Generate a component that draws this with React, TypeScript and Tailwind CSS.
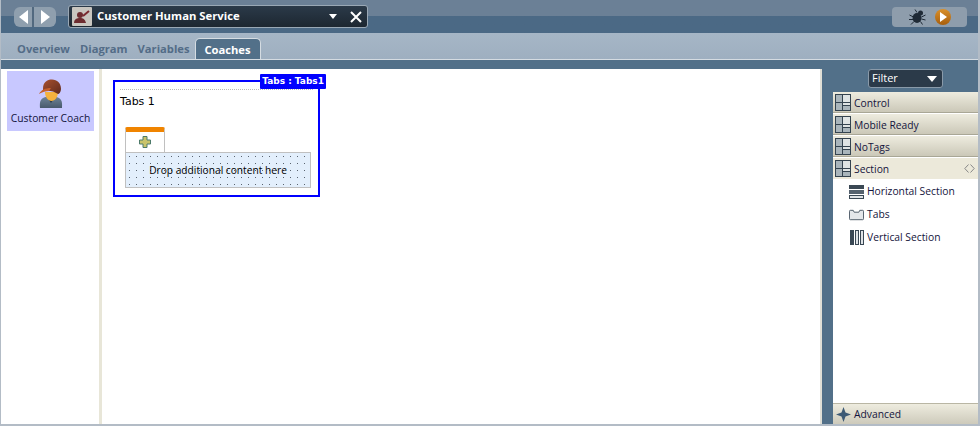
import type { ReactNode } from "react";

const uiFont = "font-['Open_Sans','Liberation_Sans',sans-serif]";

function GridIcon() {
  return (
    <svg width="16" height="17" viewBox="0 0 16 17" className="shrink-0">
      <rect x="0.5" y="0.5" width="15" height="16" fill="#dfe4e4" stroke="#34434f" />
      <rect x="1" y="1" width="6" height="15" fill="#a9b5bb" />
      <rect x="8" y="12" width="7" height="4" fill="#a9b5bb" />
      <path d="M7.500 1v15M1 8.500h14M8 11.500h7" stroke="#34434f" fill="none" />
    </svg>
  );
}

function PaletteHeader({ label, active }: { label: string; active?: boolean }) {
  return (
    <div className={`flex h-[21px] items-center gap-[3px] pl-[2px] ${active ? "bg-[#ece9da]" : "border-b border-[#a9a796] bg-gradient-to-b from-[#eeecdf] to-[#cbc8b8]"}`}>
      <GridIcon />
      <span className="pt-[3px] text-[10.3px] text-[#14143c]">{label}</span>
      {active && (
        <svg width="11" height="9" viewBox="0 0 11 9" className="ml-auto mr-[3px]">
          <path d="M4.500 .5L.8 4.500 4.500 8.500M6.500 .5L10.200 4.500 6.500 8.500" stroke="#888" fill="none" />
        </svg>
      )}
    </div>
  );
}

function PaletteItem({ label, icon }: { label: string; icon: ReactNode }) {
  return (
    <div className="flex h-[23px] items-center gap-[3px] pl-[16px]">
      <span className="flex w-[15px] justify-center">{icon}</span>
      <span className="text-[10.3px] text-[#14143c]">{label}</span>
    </div>
  );
}

export default function App() {
  return (
    <div className={`box-border flex h-[426px] w-[980px] flex-col overflow-hidden border-b-2 border-l border-r-2 border-[#b3bcc6] bg-white ${uiFont}`}>
      {/* Top bar */}
      <div className="flex h-[33px] shrink-0 items-center bg-gradient-to-b from-[#6b8096] from-50% to-[#4b6985] to-50% pl-[13px] pr-[11px]">
        <div className="flex h-[20px] w-[42px] overflow-hidden rounded-[6px] bg-[#8f9fae]">
          <div className="flex w-[20px] items-center justify-center border-r-2 border-[#52697f]">
            <div className="h-0 w-0 border-y-[7px] border-r-[9px] border-y-transparent border-r-white" />
          </div>
          <div className="flex flex-1 items-center justify-center">
            <div className="h-0 w-0 border-y-[7px] border-l-[9px] border-y-transparent border-l-white" />
          </div>
        </div>
        <div className="ml-[12px] flex h-[23px] w-[300px] items-center rounded-[3px] border border-[#9aa8b5] bg-gradient-to-b from-[#2b3a49] to-[#1d2731] pl-[3px] pr-[5px]">
          <svg width="20" height="19" viewBox="0 0 20 19" className="shrink-0">
            <rect width="20" height="19" rx="1" fill="#c9c6c0" />
            <circle cx="8" cy="8" r="3" fill="#6d2c30" />
            <path d="M2 16c0-4 3-5 6-5s5 1 6 5z" fill="#6d2c30" />
            <path d="M11 9l6-5" stroke="#7a2a30" strokeWidth="2" />
          </svg>
          <span className="ml-[5px] text-[11.3px] font-bold text-white">Customer Human Service</span>
          <div className="ml-auto h-0 w-0 border-x-[4px] border-t-[5px] border-x-transparent border-t-white" />
          <svg width="12" height="12" viewBox="0 0 12 12" className="ml-[13px]">
            <path d="M1 1l10 10M11 1L1 11" stroke="white" strokeWidth="2" />
          </svg>
        </div>
        <div className="ml-auto flex h-[20px] w-[75px] items-center justify-center gap-[9px] rounded-[4px] bg-[#8e9dac]">
          <svg width="17" height="16" viewBox="0 0 17 16">
            <ellipse cx="8" cy="9" rx="4.500" ry="5" fill="#1f2a36" />
            <circle cx="11.500" cy="4" r="2.500" fill="#1f2a36" />
            <path d="M.5 6l4 2M0 10.500h4M2 15.500l3-3M16.500 6l-4 2M16.500 11l-4-1M13.500 15.500l-2-3M6 .5l2 3" stroke="#1f2a36" />
          </svg>
          <div className="flex h-[16px] w-[16px] items-center justify-center rounded-full bg-gradient-to-b from-[#d9902a] to-[#a85f0c]">
            <div className="ml-[2px] h-0 w-0 border-y-[5px] border-l-[7px] border-y-transparent border-l-white" />
          </div>
        </div>
      </div>

      {/* Tabs */}
      <div className="flex h-[27px] shrink-0 items-end border-b border-[#d5dce2] bg-gradient-to-b from-[#a6b6c6] to-[#9eafc0] pl-[1px]">
        <div className="flex h-[21px] items-center gap-[10px] pl-[15px] pr-[5px] pt-[2px] text-[11.2px] font-bold text-[#536c87]">
          <span>Overview</span>
          <span>Diagram</span>
          <span>Variables</span>
        </div>
        <div className="flex h-[21px] w-[66px] items-center justify-center rounded-t-[5px] border border-b-0 border-[#d5dce2] bg-[#527089] pt-[2px] text-[11.2px] font-bold text-white">
          Coaches
        </div>
      </div>
      <div className="h-[9px] shrink-0 bg-[#527089]" />

      {/* Body */}
      <div className="flex min-h-0 flex-1">
        <div className="w-[98px] shrink-0 pl-[6px] pt-[2px]">
          <div className="flex h-[60px] w-[87px] flex-col items-center bg-[#c8c8ff] pt-[8px]">
            <svg width="28" height="29" viewBox="0 0 28 29">
              <defs>
                <linearGradient id="hat" x1="0" y1="0" x2="1" y2="1">
                  <stop offset="0" stopColor="#a9512f" />
                  <stop offset="1" stopColor="#5f2a1d" />
                </linearGradient>
                <linearGradient id="suit" x1="0" y1="0" x2="0" y2="1">
                  <stop offset="0" stopColor="#71869a" />
                  <stop offset="1" stopColor="#48596c" />
                </linearGradient>
              </defs>
              <path d="M3 29c0-2-1-8 3-10 2-1 5-2 8-2s6 1 8 2c4 2 3 8 3 10z" fill="url(#suit)" />
              <path d="M10 18l4 6 4-6z" fill="#2e3c4a" />
              <path d="M8 13h13c0 5-3 9-6.500 9S8 18 8 13z" fill="#f5b23e" />
              <path d="M6 10C6 3 10 .5 15 .5s9 3.500 9 9.500c0 3-2 5-3 5-4-3-9-4-15-3z" fill="url(#hat)" />
              <path d="M2 15c2-4 6-6 12-6l-2 3c-3 0-7 1-10 3z" fill="#c6602c" />
            </svg>
            <span className="mt-[3px] text-[10.3px] text-[#14143c]">Customer Coach</span>
          </div>
        </div>
        <div className="w-[3px] shrink-0 bg-[#e8e6d8]" />

        {/* Canvas */}
        <div className="min-w-0 flex-1 pl-[11px] pt-[11px]">
          <div className="relative box-border h-[117px] w-[207px] border-[2px] border-[#0000ff] px-[5px] pt-[7px] font-['DejaVu_Sans',sans-serif]">
            <div className="absolute -right-[8px] -top-[8px] flex h-[15px] items-center rounded-[1px] bg-[#0000ff] px-[2px] text-[9px] font-bold leading-none text-white">
              Tabs : Tabs1
            </div>
            <div className="border-t border-dotted border-[#bbbbbb] pt-[5px] text-[11px] leading-[14px] text-black">Tabs 1</div>
            <div className="ml-[5px] mt-[18px] flex h-[25px] w-[40px] items-center justify-center rounded-t-[2px] border border-b-0 border-[#c0c0c0] border-t-[5px] border-t-[#f08400] bg-white">
              <svg width="12" height="12" viewBox="0 0 12 12">
                <path d="M4 .5h4v3.500h3.500v4H8v3.500H4V8H.5V4H4z" fill="#c9c36a" stroke="#4d7a6a" />
              </svg>
            </div>
            <div className="ml-[5px] flex h-[36px] w-[186px] items-center justify-center border border-[#c0c0c0] bg-[#e3effc] bg-[radial-gradient(circle,#59636e_0.7px,transparent_0.9px)] bg-[length:7px_7px] pt-[2px] text-[10.2px] text-black">
              <span className="font-['Open_Sans',sans-serif]">Drop additional content here</span>
            </div>
          </div>
        </div>

        {/* Right palette */}
        <div className="flex w-[158px] shrink-0 flex-col border-l-2 border-[#e0dfd6] bg-[#527089] pl-[11px]">
          <div className="flex h-[23px] shrink-0 items-start justify-center">
            <div className="flex h-[19px] w-[75px] items-center justify-between rounded-[3px] border border-[#8a9aa9] bg-[#2b3a49] pl-[3px] pr-[5px] text-[11px] text-white">
              <span>Filter</span>
              <div className="h-0 w-0 border-x-[5px] border-t-[6px] border-x-transparent border-t-white" />
            </div>
          </div>
          <div className="flex flex-1 flex-col bg-white">
            <div className="flex flex-col gap-[1px]">
              <PaletteHeader label="Control" />
              <PaletteHeader label="Mobile Ready" />
              <PaletteHeader label="NoTags" />
              <PaletteHeader label="Section" active />
            </div>
            <div className="flex-1 pt-[1px]">
              <PaletteItem
                label="Horizontal Section"
                icon={
                  <svg width="15" height="14" viewBox="0 0 15 14">
                    <rect y="0" width="15" height="4" fill="#3a4854" />
                    <rect y="5" width="15" height="4" fill="#55626e" />
                    <rect x=".5" y="10.500" width="14" height="3" fill="#dfe3e6" stroke="#3a4854" />
                  </svg>
                }
              />
              <PaletteItem
                label="Tabs"
                icon={
                  <svg width="16" height="12" viewBox="0 0 16 12">
                    <path d="M.5 10V2q0-1 1-1h3l1 2h5l1-2h3q1 0 1 1v8q0 1-1 1h-13q-1 0-1-1z" fill="#e4e7ea" stroke="#4a5864" />
                  </svg>
                }
              />
              <PaletteItem
                label="Vertical Section"
                icon={
                  <svg width="14" height="15" viewBox="0 0 14 15">
                    <rect x="0" width="4" height="15" fill="#3a4854" />
                    <rect x="5.500" y=".5" width="3" height="14" fill="#dfe3e6" stroke="#3a4854" />
                    <rect x="10.500" y=".5" width="3" height="14" fill="#dfe3e6" stroke="#3a4854" />
                  </svg>
                }
              />
            </div>
            <div className="flex h-[21px] items-center gap-[3px] border-t border-[#b9b6a4] bg-gradient-to-b from-[#eeecdf] to-[#cdcabb] pl-[3px]">
              <svg width="15" height="15" viewBox="0 0 15 15">
                <path d="M7.500 0L9.500 5.500 15 7.500 9.500 9.500 7.500 15 5.500 9.500 0 7.500 5.500 5.500z" fill="#3d5a75" />
              </svg>
              <span className="pt-[2px] text-[10.3px] text-[#14143c]">Advanced</span>
            </div>
          </div>
        </div>
      </div>
    </div>
  );
}
